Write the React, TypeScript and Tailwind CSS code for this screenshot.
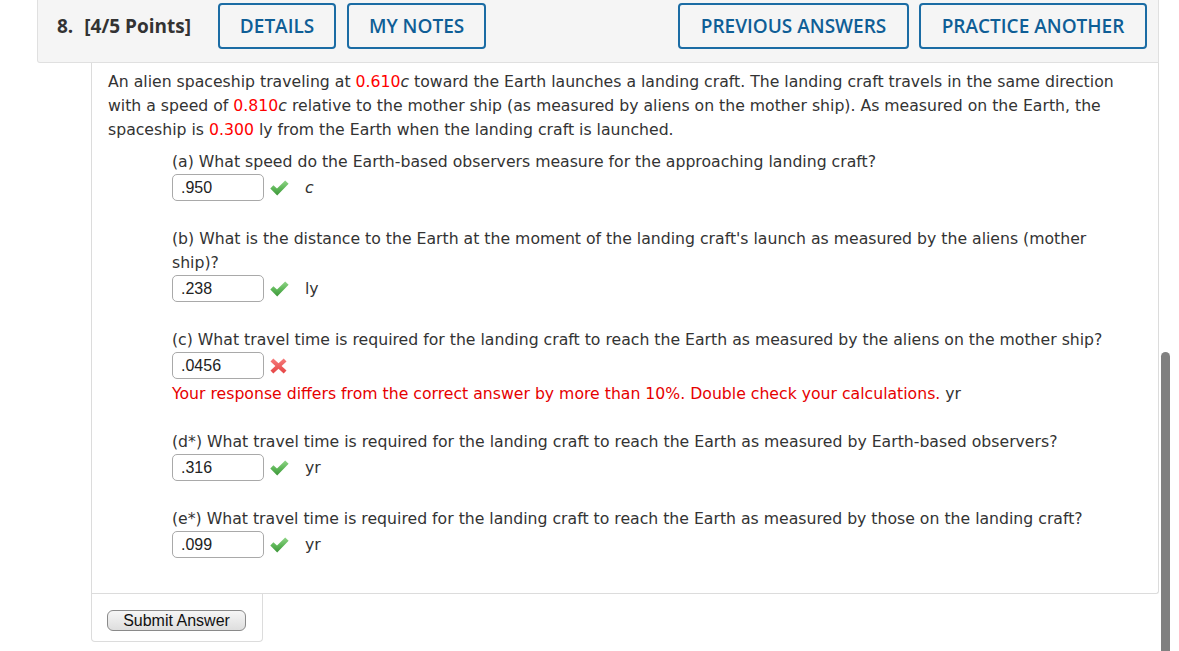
import React from 'react';

const verdana = { fontFamily: '"DejaVu Sans", Verdana, sans-serif' };
const arial = { fontFamily: '"Liberation Sans", Arial, sans-serif' };
const openSans = { fontFamily: '"Open Sans", "Liberation Sans", sans-serif' };

const Check = () => (
  <svg width="19" height="16" viewBox="0 0 19 16" aria-label="Correct">
    <defs>
      <linearGradient id="chk" x1="0" y1="0" x2="0" y2="1">
        <stop offset="0" stopColor="#8fd486" />
        <stop offset="0.55" stopColor="#5cb556" />
        <stop offset="1" stopColor="#3e963a" />
      </linearGradient>
    </defs>
    <path d="M0.3 8.4 L3.4 5.3 L7 8.6 L15.2 0.6 L18.6 3.8 L7.2 15.4 Z" fill="url(#chk)" />
  </svg>
);

const Cross = () => (
  <svg width="17" height="16" viewBox="0 0 17 16" aria-label="Incorrect">
    <defs>
      <linearGradient id="crs" x1="0" y1="0" x2="0" y2="1">
        <stop offset="0" stopColor="#f67c7c" />
        <stop offset="1" stopColor="#e54444" />
      </linearGradient>
    </defs>
    <path
      d="M0.5 3.4 L3.3 0.6 L8.5 5.3 L13.7 0.6 L16.5 3.4 L11.6 8 L16.5 12.6 L13.7 15.4 L8.5 10.7 L3.3 15.4 L0.5 12.6 L5.4 8 Z"
      fill="url(#crs)"
    />
  </svg>
);

type PartProps = {
  question: React.ReactNode;
  value: string;
  correct: boolean;
  unit?: React.ReactNode;
  error?: string;
  errorUnit?: string;
  className?: string;
};

const Part = ({ question, value, correct, unit, error, errorUnit, className = '' }: PartProps) => (
  <div className={className}>
    <div className="leading-[24px] whitespace-nowrap">{question}</div>
    <div className="flex items-center h-[27px]">
      <div
        className="w-[92px] h-[27px] rounded-[5px] border border-[#a9a9a9] bg-white pl-[8px] flex items-center text-[16px] text-[#222]"
        style={arial}
      >
        {value}
      </div>
      <div className="ml-[6px] w-[19px] flex items-center">{correct ? <Check /> : <Cross />}</div>
      {unit && <div className="ml-[16px]">{unit}</div>}
    </div>
    {error && (
      <div className="mt-[3px] leading-[24px] whitespace-nowrap">
        <span className="text-[#e60000]">{error}</span> {errorUnit}
      </div>
    )}
  </div>
);

const HeaderButton = ({ label, width }: { label: string; width: string }) => (
  <button
    className={`${width} h-[46px] rounded-[4px] border-2 border-[#1b6ca4] text-[#0f5e96] text-[19px] font-semibold bg-transparent flex items-center justify-center`}
    style={openSans}
  >
    {label}
  </button>
);

export default function App() {
  return (
    <div className="relative min-h-[651px] bg-white overflow-hidden">
      <div className="ml-[37px] w-[1122px]">
        <div
          className="h-[63px] bg-[#f5f5f5] border-l border-r border-b border-[#e0e0e0] rounded-bl-[3px] flex items-start pt-[3px]"
          style={openSans}
        >
          <div className="flex items-center h-[46px] pl-[19px] text-[19px] font-bold text-[#333]">
            <span>8.</span>
            <span className="ml-[11px]">[4/5 Points]</span>
          </div>
          <div className="ml-[27px] flex gap-[11px]">
            <HeaderButton label="DETAILS" width="w-[118px]" />
            <HeaderButton label="MY NOTES" width="w-[139px]" />
          </div>
          <div className="ml-auto mr-[11px] flex gap-[10px]">
            <HeaderButton label="PREVIOUS ANSWERS" width="w-[231px]" />
            <HeaderButton label="PRACTICE ANOTHER" width="w-[228px]" />
          </div>
        </div>

        <div
          className="ml-[54px] w-[1068px] border-l border-r border-b border-[#dcdcdc] rounded-br-[3px] bg-white pl-[16px] pr-[16px] pt-[7px] pb-[35px] text-[15.7px] text-[#333]"
          style={verdana}
        >
          <p className="leading-[24px] whitespace-nowrap">
            An alien spaceship traveling at <span className="text-[#ff0000]">0.610</span>
            <i>c</i> toward the Earth launches a landing craft. The landing craft travels in the same direction
            <br />
            with a speed of <span className="text-[#ff0000]">0.810</span>
            <i>c</i> relative to the mother ship (as measured by aliens on the mother ship). As measured on the Earth, the
            <br />
            spaceship is <span className="text-[#ff0000]">0.300</span> ly from the Earth when the landing craft is launched.
          </p>

          <div className="ml-[64px] mt-[8px]">
            <Part
              className="mb-[26px]"
              question="(a) What speed do the Earth-based observers measure for the approaching landing craft?"
              value=".950"
              correct
              unit={<i>c</i>}
            />
            <Part
              className="mb-[26px]"
              question={
                <>
                  (b) What is the distance to the Earth at the moment of the landing craft's launch as measured by the aliens (mother
                  <br />
                  ship)?
                </>
              }
              value=".238"
              correct
              unit="ly"
            />
            <Part
              className="mb-[24px]"
              question="(c) What travel time is required for the landing craft to reach the Earth as measured by the aliens on the mother ship?"
              value=".0456"
              correct={false}
              error="Your response differs from the correct answer by more than 10%. Double check your calculations."
              errorUnit="yr"
            />
            <Part
              className="mb-[26px]"
              question="(d*) What travel time is required for the landing craft to reach the Earth as measured by Earth-based observers?"
              value=".316"
              correct
              unit="yr"
            />
            <Part
              question="(e*) What travel time is required for the landing craft to reach the Earth as measured by those on the landing craft?"
              value=".099"
              correct
              unit="yr"
            />
          </div>
        </div>

        <div className="ml-[54px] w-[172px] h-[48px] border-l border-r border-b border-[#dcdcdc] rounded-b-[4px] pl-[15px] pt-[16px]">
          <button
            className="w-[139px] h-[21px] rounded-[6px] border border-[#8a8a8a] bg-gradient-to-b from-[#f6f6f6] to-[#dedede] text-[16px] text-[#111] leading-none flex items-center justify-center"
            style={arial}
          >
            Submit Answer
          </button>
        </div>
      </div>

      <div className="absolute left-[1161px] top-[352px] w-[9px] h-[320px] rounded-full bg-[#808080]" />
    </div>
  );
}
